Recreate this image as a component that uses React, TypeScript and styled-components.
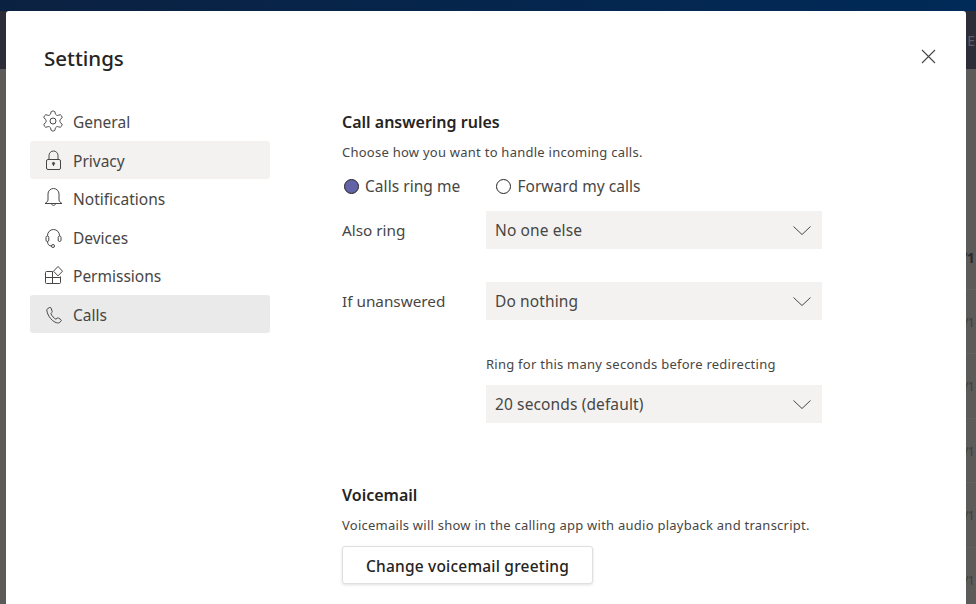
import React from "react";
import styled, { createGlobalStyle } from "styled-components";

const Global = createGlobalStyle`
  html, body { margin: 0; padding: 0; background: #5c5b59; }
  body { font-family: "Noto Sans", "Open Sans", sans-serif; overflow: hidden; }
  * { box-sizing: border-box; }
`;

const Page = styled.div`
  position: relative;
  width: 976px;
  height: 604px;
  overflow: hidden;
  display: flex;
  flex-direction: column;
  background: #5c5b59;
`;
const TopBar = styled.div`
  height: 11px;
  flex: none;
  background: linear-gradient(90deg, #0b2141, #002a58);
`;
const SubBar = styled.div`
  height: 58px;
  flex: none;
  background: #2d2c39;
  display: flex;
  justify-content: flex-end;
  align-items: center;
  padding-right: 1px;
  color: #5f5e68;
  font-size: 14px;
`;
const GhostRows = styled.div`
  display: flex;
  flex-direction: column;
  align-items: flex-end;
  padding-top: 156px;
`;
const GhostDate = styled.div<{ $strong?: boolean }>`
  height: 64.5px;
  flex: none;
  width: 60px;
  text-align: right;
  padding-right: 2px;
  font-size: ${(p) => (p.$strong ? 15 : 13)}px;
  letter-spacing: -1px;
  line-height: 64px;
  font-weight: ${(p) => (p.$strong ? 700 : 400)};
  color: ${(p) => (p.$strong ? "#2d2c2b" : "#3f3e3d")};
  border-bottom: 1px solid #636260;
`;
const Modal = styled.section`
  position: absolute;
  left: 6px;
  top: 11px;
  width: 960px;
  height: 610px;
  background: #fff;
  border-radius: 3px;
  color: #252423;
  display: grid;
  grid-template-columns: 336px 1fr;
`;
const Close = styled.button`
  position: absolute;
  left: 914px;
  top: 37px;
  width: 17px;
  height: 17px;
  padding: 0;
  border: 0;
  background: none;
  display: flex;
`;
const Side = styled.nav`
  padding: 30px 0 0 24px;
  display: flex;
  flex-direction: column;
`;
const Title = styled.h1`
  margin: 0 0 26px 14px;
  font-size: 20.5px;
  line-height: 35px;
  font-weight: 500;
  color: #252423;
`;
const NavItem = styled.div<{ $tone?: "hover" | "active" }>`
  width: 240px;
  height: 38px;
  margin-bottom: 0.5px;
  border-radius: 3px;
  display: flex;
  align-items: center;
  gap: 9px;
  padding-left: 12px;
  font-size: 15.5px;
  color: #484644;
  background: ${(p) =>
    p.$tone === "active" ? "#ebeaea" : p.$tone === "hover" ? "#f3f2f1" : "transparent"};
`;
const NavLabel = styled.span`
  margin-top: 2px;
`;
const NavIcon = styled.svg`
  width: 22px;
  height: 22px;
  flex: none;
  fill: none;
  stroke: #484644;
  stroke-width: 1;
`;
const Main = styled.main`
  padding: 99px 0 0 0;
  display: flex;
  flex-direction: column;
  align-items: flex-start;
`;
const Heading = styled.h2`
  margin: 0;
  font-size: 16px;
  line-height: 24px;
  font-weight: 600;
  color: #252423;
`;
const Desc = styled.p`
  margin: 9px 0 0;
  font-size: 13px;
  letter-spacing: 0.25px;
  line-height: 18px;
  color: #484644;
`;
const RadioRow = styled.div`
  display: flex;
  margin-top: 13px;
  height: 24px;
  align-items: center;
`;
const RadioOption = styled.label`
  display: flex;
  align-items: center;
  gap: 6px;
  font-size: 15.5px;
  letter-spacing: 0.05px;
  color: #484644;
  margin-left: 2px;
  & + & { margin-left: 36px; }
`;
const RadioDot = styled.span<{ $on?: boolean }>`
  width: 15px;
  height: 15px;
  border-radius: 50%;
  border: 1px solid #252423;
  background: ${(p) => (p.$on ? "#6264a7" : "#fff")};
`;
const Field = styled.div<{ $gap: number }>`
  display: flex;
  align-items: center;
  margin-top: ${(p) => p.$gap}px;
`;
const FieldLabel = styled.span`
  width: 144px;
  font-size: 15.3px;
  color: #484644;
`;
const Select = styled.div`
  width: 336px;
  height: 38px;
  background: #f3f2f1;
  display: flex;
  align-items: center;
  justify-content: space-between;
  padding: 0 10px 0 9px;
  font-size: 15.5px;
  letter-spacing: 0.12px;
  color: #484644;
`;
const Hint = styled.div`
  margin: 35px 0 0 144px;
  font-size: 13px;
  letter-spacing: 0.25px;
  line-height: 18px;
  color: #484644;
`;
const Indented = styled.div`
  margin: 12px 0 0 144px;
`;
const VoiceHeading = styled(Heading)`
  margin-top: 60px;
`;
const Button = styled.button`
  margin-top: 12px;
  width: 251px;
  height: 38px;
  background: #fff;
  border: 1px solid #e1dfdd;
  border-radius: 3px;
  box-shadow: 0 1px 3px rgba(0, 0, 0, 0.12);
  font-family: inherit;
  font-size: 15.5px;
  letter-spacing: 0.2px;
  font-weight: 500;
  color: #252423;
  padding: 2px 0 0;
`;

const Chevron = () => (
  <svg width="20" height="12" viewBox="0 0 20 12" fill="none" stroke="#484644" strokeWidth="1">
    <path d="M1.5 2.5 10 10.500 18.500 2.500" />
  </svg>
);

const Gear = () => (
  <NavIcon viewBox="1 1 22 22">
    <path d="M12.220 2h-.44a2 2 0 0 0-2 2v.18a2 2 0 0 1-1 1.730l-.43.25a2 2 0 0 1-2 0l-.15-.08a2 2 0 0 0-2.730.73l-.22.38a2 2 0 0 0 .73 2.730l.15.1a2 2 0 0 1 1 1.720v.51a2 2 0 0 1-1 1.740l-.15.09a2 2 0 0 0-.73 2.730l.22.38a2 2 0 0 0 2.730.73l.15-.08a2 2 0 0 1 2 0l.43.25a2 2 0 0 1 1 1.730V20a2 2 0 0 0 2 2h.44a2 2 0 0 0 2-2v-.18a2 2 0 0 1 1-1.730l.43-.25a2 2 0 0 1 2 0l.15.08a2 2 0 0 0 2.730-.73l.22-.39a2 2 0 0 0-.73-2.730l-.15-.08a2 2 0 0 1-1-1.740v-.5a2 2 0 0 1 1-1.740l.15-.09a2 2 0 0 0 .73-2.730l-.22-.38a2 2 0 0 0-2.730-.73l-.15.08a2 2 0 0 1-2 0l-.43-.25a2 2 0 0 1-1-1.730V4a2 2 0 0 0-2-2z" />
    <circle cx="12" cy="12" r="3" />
  </NavIcon>
);
const Lock = () => (
  <NavIcon viewBox="0 0 22 22">
    <rect x="4.500" y="10.500" width="14" height="10" rx="1.500" />
    <path d="M7 10.500V6.500a4.500 4.500 0 0 1 9 0v4" />
    <circle cx="11.500" cy="14.500" r="1.100" fill="#484644" />
    <path d="M11.500 15v2" />
  </NavIcon>
);
const Bell = () => (
  <NavIcon viewBox="0 0 22 22">
    <path d="M6 13V7a5.500 5.500 0 0 1 11 0v6c0 1.500 1.300 2.200 3 3.500H3C4.700 15.200 6 14.500 6 13z" strokeLinejoin="round" />
    <path d="M9.500 16.500c0 2.500 4 2.500 4 0" />
  </NavIcon>
);
const Headset = () => (
  <NavIcon viewBox="0 0 22 22">
    <path d="M5.500 10V9.500a6 6 0 0 1 12 0v.5" />
    <rect x="4" y="10" width="2.800" height="5.500" rx="1.400" />
    <rect x="16.200" y="10" width="2.800" height="5.500" rx="1.400" />
    <path d="M5.500 15.500c0 2.800 1.500 4.500 4 4.500" />
    <circle cx="11" cy="20" r="1.500" />
  </NavIcon>
);
const Apps = () => (
  <NavIcon viewBox="0 0 22 22">
    <path d="M10.500 7.500H4.500a1 1 0 0 0-1 1v10a1 1 0 0 0 1 1h13a1 1 0 0 0 1-1v-6" />
    <path d="M3.500 13.500h15M10.500 7.500v12" />
    <path d="M16 2.500l4.500 4.700-4.500 4.700-4.500-4.700z" strokeLinejoin="round" />
  </NavIcon>
);
const Phone = () => (
  <NavIcon viewBox="0 0 22 22">
    <path transform="translate(1 1.500)" d="M6.500 3 4.500 4.200C3.500 5 3.800 7 4.800 9.500c1.400 3.300 4 6.400 7 8 2 1 3.700 1.300 4.800.5l1.400-1.300c.5-.5.4-1.100-.2-1.600l-2.200-1.500c-.5-.3-1-.3-1.500.1l-1.200 1c-1.800-.8-4.200-3.500-5-5.600l1-1.200c.4-.5.4-1 .1-1.500L7.900 3.300C7.500 2.800 7 2.700 6.500 3z" strokeLinejoin="round" />
  </NavIcon>
);

export default function App() {
  return (
    <>
      <Global />
      <Page>
        <TopBar />
        <SubBar>E</SubBar>
        <GhostRows>
          <GhostDate $strong>/1</GhostDate>
          <GhostDate>/1</GhostDate>
          <GhostDate>/1</GhostDate>
          <GhostDate>/1</GhostDate>
          <GhostDate>/1</GhostDate>
          <GhostDate>/1</GhostDate>
        </GhostRows>
        <Modal>
          <Close aria-label="Close">
            <svg width="17" height="17" viewBox="0 0 17 17" stroke="#484644" strokeWidth="1.100">
              <path d="M2 2 15 15M15 2 2 15" />
            </svg>
          </Close>
          <Side>
            <Title>Settings</Title>
            <NavItem><Gear /><NavLabel>General</NavLabel></NavItem>
            <NavItem $tone="hover"><Lock /><NavLabel>Privacy</NavLabel></NavItem>
            <NavItem><Bell /><NavLabel>Notifications</NavLabel></NavItem>
            <NavItem><Headset /><NavLabel>Devices</NavLabel></NavItem>
            <NavItem><Apps /><NavLabel>Permissions</NavLabel></NavItem>
            <NavItem $tone="active"><Phone /><NavLabel>Calls</NavLabel></NavItem>
          </Side>
          <Main>
            <Heading>Call answering rules</Heading>
            <Desc>Choose how you want to handle incoming calls.</Desc>
            <RadioRow>
              <RadioOption><RadioDot $on />Calls ring me</RadioOption>
              <RadioOption><RadioDot />Forward my calls</RadioOption>
            </RadioRow>
            <Field $gap={13}>
              <FieldLabel>Also ring</FieldLabel>
              <Select>No one else<Chevron /></Select>
            </Field>
            <Field $gap={33}>
              <FieldLabel>If unanswered</FieldLabel>
              <Select>Do nothing<Chevron /></Select>
            </Field>
            <Hint>Ring for this many seconds before redirecting</Hint>
            <Indented>
              <Select>20 seconds (default)<Chevron /></Select>
            </Indented>
            <VoiceHeading>Voicemail</VoiceHeading>
            <Desc>Voicemails will show in the calling app with audio playback and transcript.</Desc>
            <Button>Change voicemail greeting</Button>
          </Main>
        </Modal>
      </Page>
    </>
  );
}
